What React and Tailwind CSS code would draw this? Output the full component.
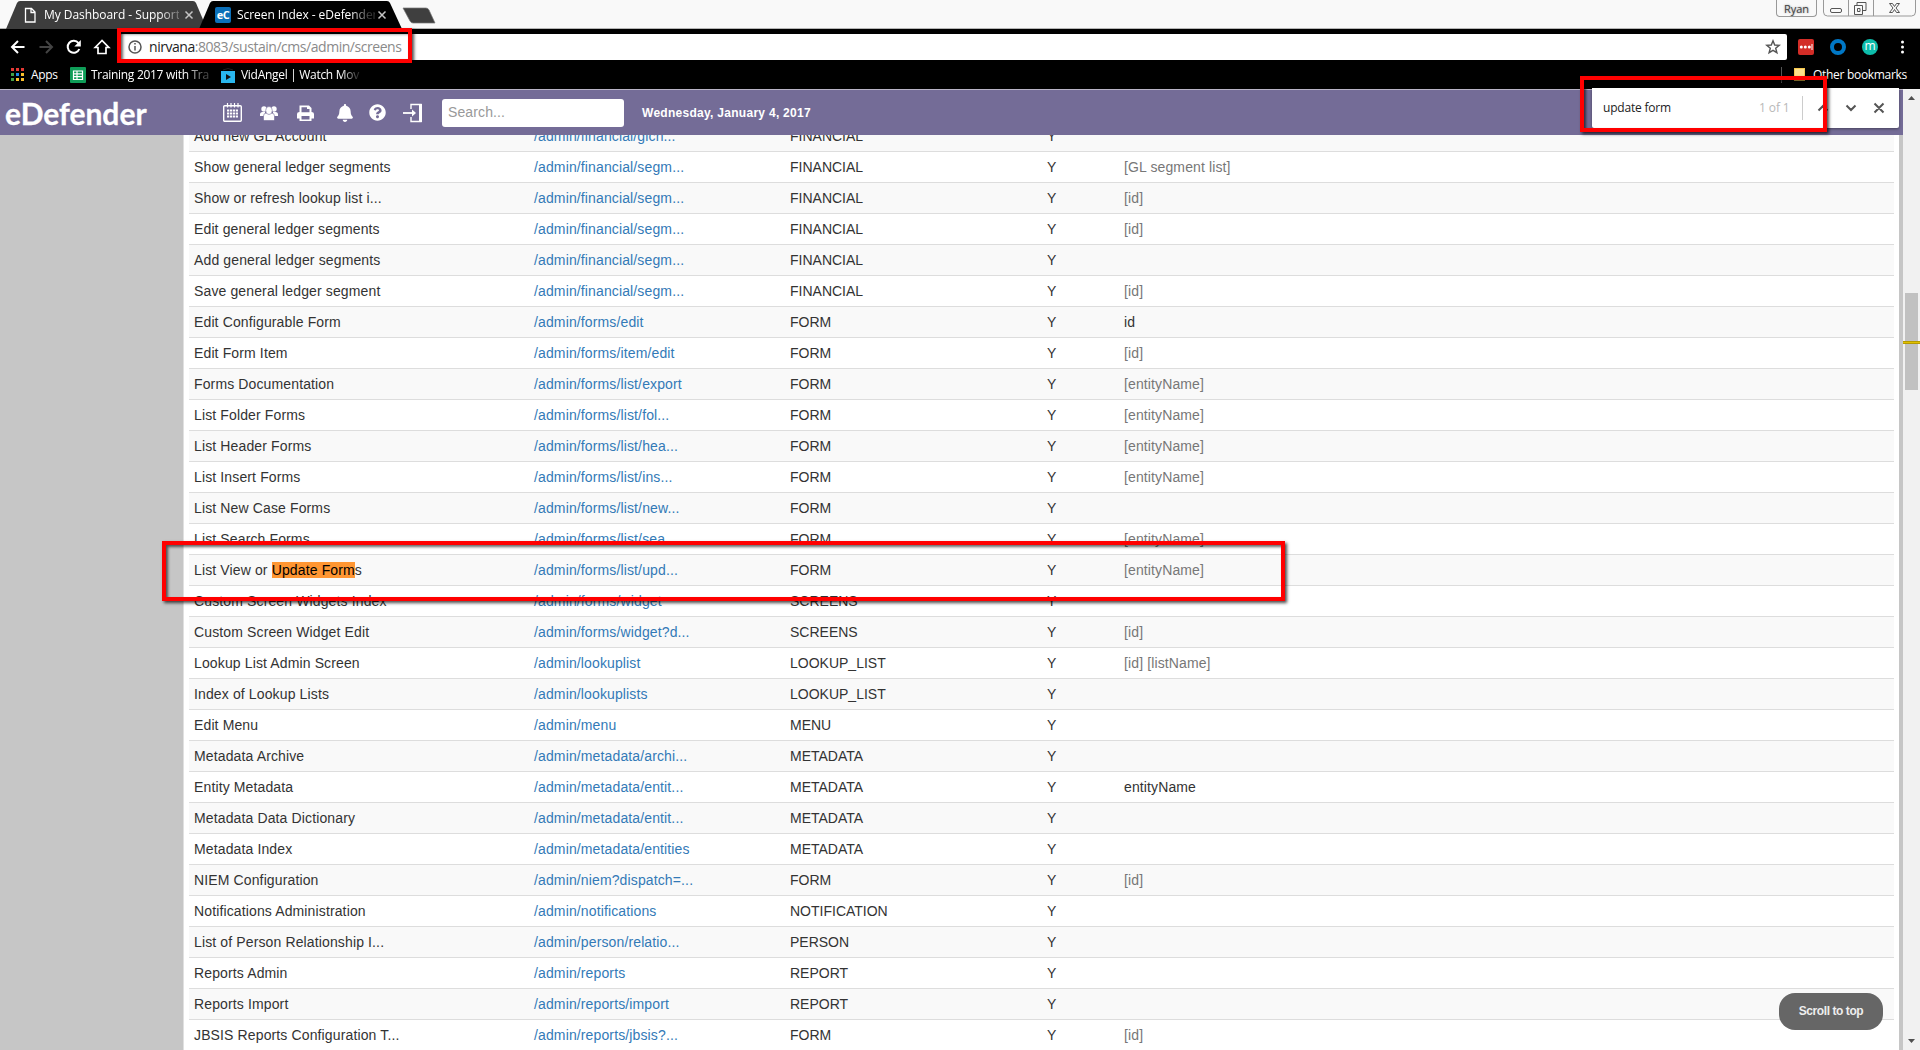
import React from "react";
import { FaBell, FaQuestionCircle } from "react-icons/fa";

const rows = [
  ["Add new GL Account", "/admin/financial/glch...", "FINANCIAL", ""],
  ["Show general ledger segments", "/admin/financial/segm...", "FINANCIAL", "[GL segment list]"],
  ["Show or refresh lookup list i...", "/admin/financial/segm...", "FINANCIAL", "[id]"],
  ["Edit general ledger segments", "/admin/financial/segm...", "FINANCIAL", "[id]"],
  ["Add general ledger segments", "/admin/financial/segm...", "FINANCIAL", ""],
  ["Save general ledger segment", "/admin/financial/segm...", "FINANCIAL", "[id]"],
  ["Edit Configurable Form", "/admin/forms/edit", "FORM", "id"],
  ["Edit Form Item", "/admin/forms/item/edit", "FORM", "[id]"],
  ["Forms Documentation", "/admin/forms/list/export", "FORM", "[entityName]"],
  ["List Folder Forms", "/admin/forms/list/fol...", "FORM", "[entityName]"],
  ["List Header Forms", "/admin/forms/list/hea...", "FORM", "[entityName]"],
  ["List Insert Forms", "/admin/forms/list/ins...", "FORM", "[entityName]"],
  ["List New Case Forms", "/admin/forms/list/new...", "FORM", ""],
  ["List Search Forms", "/admin/forms/list/sea...", "FORM", "[entityName]"],
  ["List View or Update Forms", "/admin/forms/list/upd...", "FORM", "[entityName]"],
  ["Custom Screen Widgets Index", "/admin/forms/widget", "SCREENS", ""],
  ["Custom Screen Widget Edit", "/admin/forms/widget?d...", "SCREENS", "[id]"],
  ["Lookup List Admin Screen", "/admin/lookuplist", "LOOKUP_LIST", "[id] [listName]"],
  ["Index of Lookup Lists", "/admin/lookuplists", "LOOKUP_LIST", ""],
  ["Edit Menu", "/admin/menu", "MENU", ""],
  ["Metadata Archive", "/admin/metadata/archi...", "METADATA", ""],
  ["Entity Metadata", "/admin/metadata/entit...", "METADATA", "entityName"],
  ["Metadata Data Dictionary", "/admin/metadata/entit...", "METADATA", ""],
  ["Metadata Index", "/admin/metadata/entities", "METADATA", ""],
  ["NIEM Configuration", "/admin/niem?dispatch=...", "FORM", "[id]"],
  ["Notifications Administration", "/admin/notifications", "NOTIFICATION", ""],
  ["List of Person Relationship I...", "/admin/person/relatio...", "PERSON", ""],
  ["Reports Admin", "/admin/reports", "REPORT", ""],
  ["Reports Import", "/admin/reports/import", "REPORT", ""],
  ["JBSIS Reports Configuration T...", "/admin/reports/jbsis?...", "FORM", "[id]"],
];

function TabStrip() {
  return (
    <div className="relative flex h-[29px] shrink-0 border-b border-[#b5b5b5] bg-[#f9f9f9]">
      <svg className="absolute left-0 top-0" width="440" height="29" viewBox="0 0 440 29">
        <path d="M6 29 L17 3 Q18 1 20 1 H193 Q195 1 196 3 L207 29Z" fill="#3d3d3d" />
        <path d="M199 29 L210 3 Q211 1 213 1 H387 Q389 1 390 3 L402 29Z" fill="#000" />
        <path d="M403 8 H426 Q428 8 429 10 L435 23 H413 Q411 23 410 21Z" fill="#3f3f3f" stroke="#777" strokeWidth=".7" />
        <path d="M25.500 8.500h6l3.500 3.500v10h-9.500zM31 8.500v4h4" fill="none" stroke="#fff" strokeWidth="1.300" />
        <path d="M185.500 11.500l7 7m0-7l-7 7M378.500 11.500l7 7m0-7l-7 7" stroke="#c4c4c4" strokeWidth="1.500" />
      </svg>
      <div className="relative flex h-[29px] items-center whitespace-nowrap text-[12px] leading-5 text-white">
        <span className="ml-[44px] w-[135px] tracking-[-0.05px] [mask-image:linear-gradient(to_right,#000_86%,#0005_98%)]">My Dashboard - Support</span>
        <span className="ml-[36px] flex h-4 w-4 items-center justify-center rounded-[2px] bg-[#0b6fb8] text-[11px] font-bold leading-4 tracking-tighter">eC</span>
        <span className="ml-[6px] w-[138px] tracking-[-0.05px] [mask-image:linear-gradient(to_right,#000_82%,#0003_96%)]">Screen Index - eDefender</span>
      </div>
      <div className="ml-auto mr-[4px] flex text-[#555]">
        <div className="mr-[6px] flex h-[17px] w-[41px] items-center justify-center rounded-b-[4px] border border-t-0 border-[#999] pt-[1px] text-[11px] leading-4 text-[#444] [text-shadow:0_0_2px_#888]">Ryan</div>
        <svg width="93" height="17" viewBox="0 0 93 17" fill="none" stroke="#555">
          <path d="M.5 0v12q0 4 4 4h84q4 0 4-4V0M25.500 0v16M50.500 0v16" stroke="#999" />
          <rect x="7.500" y="8.500" width="11" height="4" rx="1.500" />
          <path d="M34 5.500V2.500h9v8h-3M31.500 5.500h8v9h-8zM34.500 8.500h2.500v3h-2.500z" />
          <path d="M66.500 3.500h3l2 3 2-3h3l-3.500 4.500 3.500 4.500h-3l-2-3-2 3h-3l3.500-4.500z" />
        </svg>
      </div>
    </div>
  );
}

function AddressBar() {
  return (
    <div className="flex h-[35px] shrink-0 items-center bg-black pt-[1px]">
      <svg width="120" height="34" viewBox="0 0 120 34" fill="none" stroke="#fff" strokeWidth="2">
        <path d="M24.500 17h-12M18 11l-6 6 6 6" />
        <path d="M39.500 17h12M46 11l6 6-6 6" stroke="#444" />
        <path d="M78.500 13.200a6 6 0 1 0 .8 5.800" /><path d="M80.800 10v6.500h-6.500z" fill="#fff" stroke="none" />
        <path d="M102 10.500l-6.800 7H98v6h8v-6h2.800z" strokeWidth="1.700" />
      </svg>
      <div className="flex h-[26px] w-[1667px] items-center rounded-[2px] bg-white">
        <svg width="29" height="26" viewBox="0 0 29 26" fill="none" stroke="#555" strokeWidth="1.500">
          <circle cx="15" cy="13" r="6" /><path d="M15 12v4.500M15 9v1.500" />
        </svg>
        <span className="text-[14px] leading-5 tracking-[-0.46px] text-[#8a8a8a]"><span className="text-[#222]">nirvana</span>:8083/sustain/cms/admin/screens</span>
        <svg className="ml-auto mr-[6px]" width="16" height="16" viewBox="0 0 16 16" fill="none" stroke="#555" strokeWidth="1.400">
          <path d="M8 1.800l1.700 4.200 4.500.3-3.500 2.900 1.200 4.500L8 11.300l-3.900 2.400 1.200-4.500L1.800 6.300l4.500-.3z" />
        </svg>
      </div>
      <div className="ml-[11px] flex h-4 w-4 items-center rounded-[2px] bg-[#d32d27]">
        <svg width="16" height="16" fill="#fff"><circle cx="3.300" cy="8" r="1.500" /><circle cx="7.300" cy="8" r="1.500" /><circle cx="11.300" cy="8" r="1.500" /><path d="M13.500 5h1v6h-1z" /></svg>
      </div>
      <div className="ml-4 h-4 w-4 rounded-full border-[4px] border-[#0077c5]" />
      <div className="ml-4 flex h-4 w-4 items-center justify-center rounded-full bg-[#0dbdab] pb-[2px] text-[12px] leading-4 text-white">m</div>
      <svg className="ml-[22px]" width="5" height="16" fill="#fff"><circle cx="2.500" cy="3" r="1.500" /><circle cx="2.500" cy="8" r="1.500" /><circle cx="2.500" cy="13" r="1.500" /></svg>
    </div>
  );
}

const dots = ["#e53935", "#e53935", "#e53935", "#43a047", "#1e88e5", "#fbc02d", "#43a047", "#fbc02d", "#fbc02d"];

function Bookmarks() {
  return (
    <div className="flex h-[25px] shrink-0 items-center whitespace-nowrap bg-black pb-[4px] text-[12px] leading-[18px] text-white">
      <div className="ml-[11px] grid grid-cols-3 gap-[2px]">
        {dots.map((c, i) => <i key={i} className="h-[3px] w-[3px]" style={{ background: c }} />)}
      </div>
      <span className="ml-[7px] w-[39px] tracking-[-0.3px]">Apps</span>
      <svg width="16" height="16"><rect width="16" height="16" rx="1" fill="#0f9d58" /><path d="M3.500 4h9v8.500h-9zM3.500 6.800h9M3.500 9.600h9M7 4v8.500" fill="none" stroke="#fff" strokeWidth="1.200" /></svg>
      <span className="ml-[5px] w-[130px] tracking-[-0.3px] [mask-image:linear-gradient(to_right,#000_72%,#0004_88%)]">Training 2017 with Tra</span>
      <svg width="14" height="16"><path d="M2 3q5-3 10 0" stroke="#222" fill="none" /><rect y="4" width="14" height="12" fill="#29b6ee" /><path d="M5 7l5 3-5 3z" fill="#111" /></svg>
      <span className="ml-[6px] w-[120px] tracking-[-0.3px] [mask-image:linear-gradient(to_right,#000_83%,#0003_97%)]">VidAngel | Watch Mov</span>
      <div className="ml-auto mr-[14px] flex items-center">
        <i className="mr-3 h-4 w-px bg-[#555]" />
        <i className="h-[13px] w-[11px] border border-[#f6c94e] bg-[#ffe08a]" />
        <span className="ml-2 w-[93px] tracking-[-0.3px]">Other bookmarks</span>
      </div>
    </div>
  );
}

function Header() {
  return (
    <header className="flex h-[46px] shrink-0 items-center border-t border-[#b9b4c6] bg-[#746c97] font-['Liberation_Sans',Arial,sans-serif] text-white">
      <span className="w-[223px] shrink-0 whitespace-nowrap pl-[5px] font-['Lato',sans-serif] text-[30px] font-bold leading-[40px] [-webkit-text-stroke:0.3px_white]">eDefender</span>
      <svg width="19" height="19" viewBox="0 0 19 19" fill="none" stroke="#fff">
        <rect x=".7" y="2.700" width="17.600" height="15.600" rx="1" strokeWidth="1.400" />
        <path d="M4.500 0v4.500M8 0v4.500M11.500 0v4.500M15 0v4.500" strokeWidth="1.200" />
        <path d="M4 7.500h11M4 10.500h11M4 13.500h11" strokeWidth="2.200" strokeDasharray="2.200 .73" />
      </svg>
      <svg className="ml-[18px]" width="18" height="16" viewBox="0 0 18 16" fill="#fff">
        <circle cx="4" cy="4" r="2.700" /><circle cx="14" cy="4" r="2.700" />
        <path d="M0 11V9.500Q0 7 2.500 7H5v4zM18 11V9.500Q18 7 15.500 7H13v4z" />
        <g stroke="#746c97" strokeWidth=".6"><path d="M3.500 14.500V11Q3.500 8 6.500 8h5q3 0 3 3v3.500q0 1-1 1h-9q-1 0-1-1z" /><ellipse cx="9" cy="5.500" rx="3.300" ry="4" /></g>
      </svg>
      <svg className="ml-[19px]" width="17" height="18" viewBox="0 0 17 18" fill="#fff">
        <path fillRule="evenodd" d="M3 1.500h9l2.500 2.500v4q2.500 0 2.500 2v4.500h-2.500v2.500H2.500v-2.500H0V10q0-2 2.500-2V1.500zM4.500 3.200v5h8V5H10V3.200zM4.500 12v3.500h8V12z" />
      </svg>
      <FaBell className="ml-[22px]" size={18} />
      <FaQuestionCircle className="ml-[15px]" size={17} />
      <svg className="ml-[17px]" width="20" height="20" viewBox="0 0 20 20" fill="none" stroke="#fff" strokeWidth="1.600">
        <path d="M8 6V1.500h10V18.500H8V14" strokeWidth="1.400" /><path d="M17.500 1v18" strokeWidth="3" /><path d="M0 10h12" strokeWidth="1.800" /><path d="M9 6.500L13 10l-4 3.500z" fill="#fff" stroke="none" />
      </svg>
      <div className="ml-[19px] flex h-7 w-[182px] items-center rounded-[3px] bg-white pl-[6px] text-[14px] tracking-[0.12px] text-[#999]">Search...</div>
      <b className="ml-[18px] text-[12px] tracking-[0.28px]">Wednesday, January 4, 2017</b>
    </header>
  );
}

function Row({ data, index }) {
  const [name, url, type, params] = data;
  const hit = index === 14;
  return (
    <div className={"flex h-[31px] shrink-0 items-center border-t border-[#ddd] pl-[5px] " + (index % 2 ? "bg-white" : "bg-[#f9f9f9]")}>
      <span className="w-[340px] tracking-[0.13px]">
        {hit ? <>List View or <mark className="bg-[#ff9632] text-black">Update Form</mark>s</> : name}
      </span>
      <span className="w-[256px] tracking-[0.13px] text-[#337ab7]">{url}</span>
      <span className="w-[257px]">{type}</span>
      <span className="w-[77px]">Y</span>
      <span className={params[0] === "[" ? "tracking-[0.12px] text-[#777]" : "tracking-[0.12px]"}>{params}</span>
    </div>
  );
}

export default function App() {
  return (
    <div className="relative flex h-[1050px] w-[1920px] flex-col overflow-hidden bg-white font-['Open_Sans','Noto_Sans',sans-serif]">
      <TabStrip />
      <AddressBar />
      <Bookmarks />
      <div className="flex min-h-0 flex-1">
        <div className="flex min-w-0 flex-1 flex-col">
          <Header />
          <div className="flex min-h-0 flex-1 overflow-hidden bg-[#c6c6c6]">
            <div className="ml-[183px] w-[1716px] overflow-hidden border-l border-[#e0e0e0] bg-white pl-[5px] pr-[5px] font-['Liberation_Sans',Arial,sans-serif] text-[14px] text-[#333]">
              <div className="-mt-[15px] flex flex-col">
                {rows.map((r, i) => <Row key={i} data={r} index={i} />)}
              </div>
            </div>
          </div>
        </div>
        <div className="flex w-[17px] flex-col items-center bg-[#f1f1f1]">
          <svg width="17" height="17" fill="#505050"><path d="M5 11h7L8.500 7z" /></svg>
          <div className="mt-[187px] h-[97px] w-[13px] bg-[#c1c1c1]" />
          <svg className="mt-auto" width="17" height="17" fill="#505050"><path d="M5 6h7l-3.500 4z" /></svg>
        </div>
      </div>

      <div className="absolute left-[1903px] top-[341px] h-[3px] w-[17px] border-y border-[#b59a00] bg-[#e0c000]" />
      <div className="absolute left-[1592px] top-[88px] flex h-10 w-[307px] items-center whitespace-nowrap rounded-b-[2px] bg-white text-[12px] leading-5 shadow-[0_1px_3px_rgba(0,0,0,0.4)]">
        <span className="ml-[11px] w-[156px] tracking-[-0.2px] text-[#222]">update form</span>
        <span className="w-[43px] tracking-[-0.1px] text-[#b8b8b8]">1 of 1</span>
        <svg width="97" height="40" viewBox="210 0 97 40">
          <path d="M210.500 8v24" stroke="#ccc" />
          <path d="M226.500 22.500l4.500-4.500 4.500 4.500M254.500 17.500l4.500 4.500 4.500-4.500M282.500 15.500l9 9m0-9l-9 9" fill="none" stroke="#555" strokeWidth="2" />
        </svg>
      </div>
      <div className="absolute left-[1779px] top-[993px] flex h-[37px] w-[104px] items-center justify-center rounded-[16px] bg-[#666] pb-[2px] font-['Liberation_Sans',Arial,sans-serif] text-[12px] font-bold tracking-[-0.42px] text-[#eee]">Scroll to top</div>

      <div className="absolute left-[117px] top-[28px] h-[35px] w-[295px] border-4 border-[#f00] shadow-[2px_2px_3px_rgba(0,0,0,0.7),inset_2px_2px_3px_rgba(0,0,0,0.6)]" />
      <div className="absolute left-[1580px] top-[76px] h-[56px] w-[247px] border-4 border-[#f00] shadow-[2px_2px_3px_rgba(0,0,0,0.7),inset_2px_2px_3px_rgba(0,0,0,0.6)]" />
      <div className="absolute left-[162px] top-[541px] h-[60px] w-[1123px] border-4 border-[#f00] shadow-[2px_2px_3px_rgba(0,0,0,0.7),inset_2px_2px_3px_rgba(0,0,0,0.6)]" />
    </div>
  );
}
